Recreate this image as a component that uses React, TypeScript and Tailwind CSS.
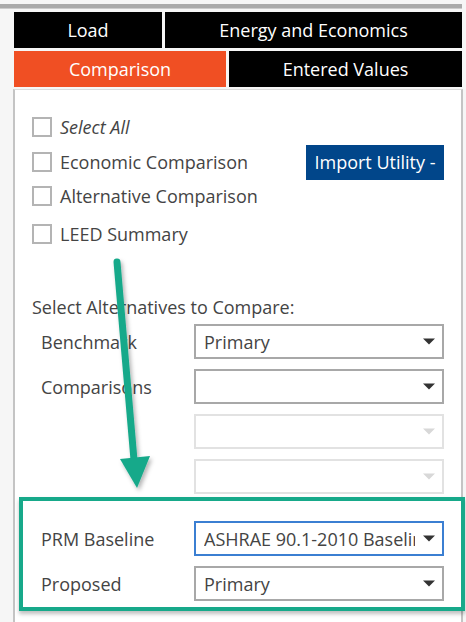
import React from "react";

const font = { fontFamily: '"Open Sans", "Noto Sans", Arial, sans-serif' };

function Check({ label, italic }: { label: string; italic?: boolean }) {
  return (
    <div className="flex items-center gap-[8px] h-[20px]">
      <span className="w-[20px] h-[20px] border-2 border-[#b4b4b4] bg-white shrink-0" />
      <span className={"text-[18px] text-[#444] leading-none " + (italic ? "italic" : "")}>{label}</span>
    </div>
  );
}

function Caret({ disabled }: { disabled?: boolean }) {
  return (
    <svg width="12" height="7" viewBox="0 0 12 7" className="shrink-0">
      <path d="M0 0.5 H12 L6 6.5 Z" fill={disabled ? "#d8d8d8" : "#333"} />
    </svg>
  );
}

function Select({
  value,
  disabled,
  focused,
}: {
  value?: string;
  disabled?: boolean;
  focused?: boolean;
}) {
  const border = focused
    ? "border-[#3b7fd2]"
    : disabled
    ? "border-[#e2e2e2]"
    : "border-[#a8a8a8]";
  return (
    <div
      className={
        "w-[250px] h-[35px] border-2 bg-white flex items-center pl-[8px] pr-[7px] gap-[8px] shrink-0 " + border
      }
    >
      <span className="flex-1 text-[18px] text-[#444] whitespace-nowrap overflow-hidden leading-[26px] h-[26px]">
        {value}
      </span>
      <Caret disabled={disabled} />
    </div>
  );
}

function Row({ label, children }: { label?: string; children: React.ReactNode }) {
  return (
    <div className="flex items-center">
      <span className="w-[179px] pl-[26px] text-[18px] text-[#444] leading-none">{label}</span>
      {children}
    </div>
  );
}

export default function App() {
  return (
    <div className="relative w-[466px] h-[622px] overflow-hidden bg-[#f6f6f6]" style={font}>
      <div className="h-[4px]" />
      <div className="h-[5px] mr-[4px] bg-[#aaaaaa] border-b border-[#cccccc]" />
      <div className="h-[3px]" />
      <div className="ml-[13px] mr-[3px] flex flex-col">
        <div className="flex gap-[3px] pl-[1px] pr-[1px]">
          <div className="w-[148px] h-[36px] bg-black text-white flex items-center justify-center text-[18px]">
            Load
          </div>
          <div className="flex-1 h-[36px] bg-black text-white flex items-center justify-center text-[18px]">
            Energy and Economics
          </div>
        </div>
        <div className="flex gap-[3px] mt-[3px] pl-[1px] pr-[1px]">
          <div className="w-[212px] h-[36px] bg-[#f04f23] text-white flex items-center justify-center text-[18px]">
            Comparison
          </div>
          <div className="flex-1 h-[36px] bg-black text-white flex items-center justify-center text-[18px]">
            Entered Values
          </div>
        </div>
        <div className="mt-[2px] h-[540px] bg-white border-l-2 border-r-2 border-t border-[#c4c4c4] border-t-[#dcdcdc] pt-[27px]">
          <div className="pl-[17px] flex flex-col">
            <Check label="Select All" italic />
            <div className="flex items-center justify-between h-[20px] mt-[15px] pr-[17px]">
              <Check label="Economic Comparison" />
              <div className="h-[35px] w-[138px] shrink-0 bg-[#01468a] text-white text-[18px] flex items-center justify-center">
                Import Utility -
              </div>
            </div>
            <div className="mt-[14px]">
              <Check label="Alternative Comparison" />
            </div>
            <div className="mt-[18px]">
              <Check label="LEED Summary" />
            </div>
          </div>
          <div className="mt-[54px] pl-[17px] text-[18px] text-[#444] leading-none">
            Select Alternatives to Compare:
          </div>
          <div className="mt-[8px] flex flex-col gap-[10px]">
            <Row label="Benchmark">
              <Select value="Primary" />
            </Row>
            <Row label="Comparisons">
              <Select />
            </Row>
            <Row>
              <Select disabled />
            </Row>
            <Row>
              <Select disabled />
            </Row>
          </div>
          <div className="mt-[3px] ml-[4px] -mr-[4px] border-4 border-[#17a98a] pt-[20px] pb-[6px] flex flex-col gap-[10px] shadow-[0_3px_4px_rgba(0,0,0,0.25)]">
            <div className="flex items-center">
              <span className="w-[171px] pl-[18px] text-[18px] text-[#444] leading-none">PRM Baseline</span>
              <Select value="ASHRAE 90.1-2010 Baseline" focused />
            </div>
            <div className="flex items-center">
              <span className="w-[171px] pl-[18px] text-[18px] text-[#444] leading-none">Proposed</span>
              <Select value="Primary" />
            </div>
          </div>
        </div>
      </div>
      <svg
        className="absolute left-0 top-0 pointer-events-none"
        width="466"
        height="622"
        viewBox="0 0 466 622"
      >
        <defs>
          <filter id="sh" x="-50%" y="-10%" width="200%" height="120%">
            <feDropShadow dx="2" dy="3" stdDeviation="2" floodColor="#000" floodOpacity="0.3" />
          </filter>
        </defs>
        <g filter="url(#sh)">
          <line x1="117" y1="262" x2="134" y2="460" stroke="#17a98a" strokeWidth="7" strokeLinecap="round" />
          <polygon points="120,459 150,456 137,488" fill="#17a98a" />
        </g>
      </svg>
    </div>
  );
}
